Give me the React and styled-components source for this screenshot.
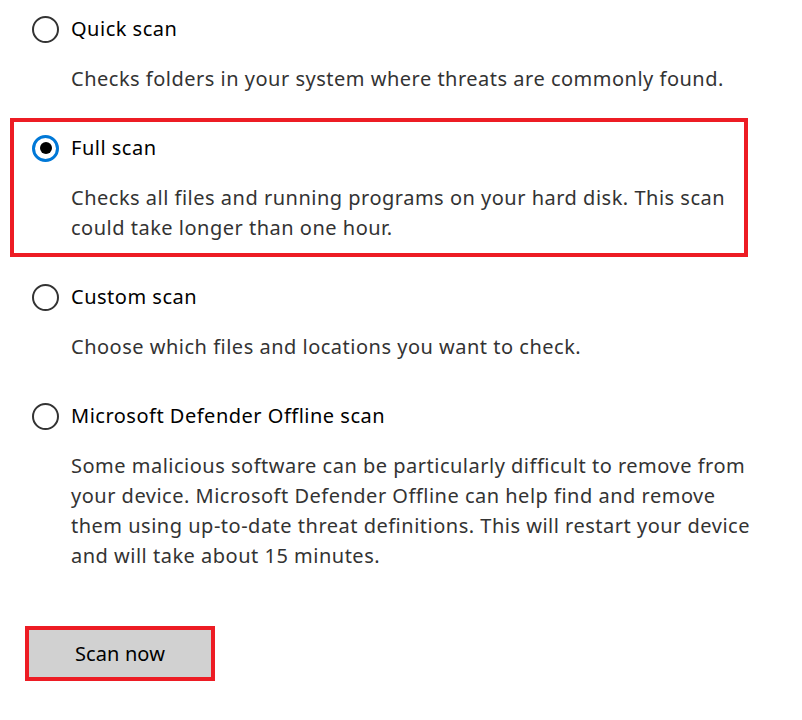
import React, { useState } from "react";
import styled, { createGlobalStyle } from "styled-components";

const Global = createGlobalStyle`
  html, body { margin: 0; padding: 0; background: #ffffff; }
  body { font-family: "Noto Sans", "Open Sans", sans-serif; letter-spacing: 0.5px; }
`;

const Page = styled.div`
  display: flex;
  flex-direction: column;
  gap: 10px;
  margin-top: -1px;
  padding: 0 0 0 10px;
  width: 792px;
  box-sizing: border-box;
`;

const Option = styled.div`
  width: 738px;
  box-sizing: border-box;
  border: 4px solid ${(p) => (p.$selected ? "#ed1c24" : "transparent")};
  padding: 11px 0 10px 18px;
  display: flex;
  flex-direction: column;
  gap: 20px;
  cursor: pointer;
`;

const LabelRow = styled.div`
  display: flex;
  align-items: center;
  gap: 12px;
  height: 30px;
`;

const Radio = styled.span`
  width: 27px;
  height: 27px;
  box-sizing: border-box;
  border-radius: 50%;
  border: ${(p) => (p.$checked ? "3px solid #0078d7" : "2.5px solid #333333")};
  display: flex;
  align-items: center;
  justify-content: center;
  flex: none;
  &::after {
    content: "";
    display: ${(p) => (p.$checked ? "block" : "none")};
    width: 12px;
    height: 12px;
    border-radius: 50%;
    background: #000000;
  }
`;

const Label = styled.span`
  font-size: 20px;
  line-height: 30px;
  color: #000000;
  white-space: nowrap;
`;

const Desc = styled.div`
  margin-left: 39px;
  font-size: 20px;
  line-height: 30px;
  color: #333333;
  white-space: nowrap;
`;

const ButtonWrap = styled.div`
  margin: 31px 0 0 15px;
`;

const Button = styled.button`
  width: 190px;
  height: 55px;
  box-sizing: border-box;
  border: 4px solid #ed1c24;
  background: #d1d1d1;
  font-family: inherit;
  letter-spacing: 0.1px;
  font-size: 20px;
  color: #000000;
  padding: 0;
  cursor: pointer;
`;

const options = [
  {
    id: "quick",
    label: "Quick scan",
    desc: ["Checks folders in your system where threats are commonly found."],
  },
  {
    id: "full",
    label: "Full scan",
    desc: [
      "Checks all files and running programs on your hard disk. This scan",
      "could take longer than one hour.",
    ],
  },
  {
    id: "custom",
    label: "Custom scan",
    desc: ["Choose which files and locations you want to check."],
  },
  {
    id: "offline",
    label: "Microsoft Defender Offline scan",
    desc: [
      "Some malicious software can be particularly difficult to remove from",
      "your device. Microsoft Defender Offline can help find and remove",
      "them using up-to-date threat definitions. This will restart your device",
      "and will take about 15 minutes.",
    ],
  },
];

export default function App() {
  const [selected, setSelected] = useState("full");
  return (
    <>
      <Global />
      <Page>
        {options.map((o) => (
          <Option key={o.id} $selected={o.id === selected} onClick={() => setSelected(o.id)}>
            <LabelRow>
              <Radio $checked={o.id === selected} />
              <Label>{o.label}</Label>
            </LabelRow>
            <Desc>
              {o.desc.map((line, i) => (
                <React.Fragment key={i}>
                  {line}
                  {i < o.desc.length - 1 && <br />}
                </React.Fragment>
              ))}
            </Desc>
          </Option>
        ))}
        <ButtonWrap>
          <Button>Scan now</Button>
        </ButtonWrap>
      </Page>
    </>
  );
}
